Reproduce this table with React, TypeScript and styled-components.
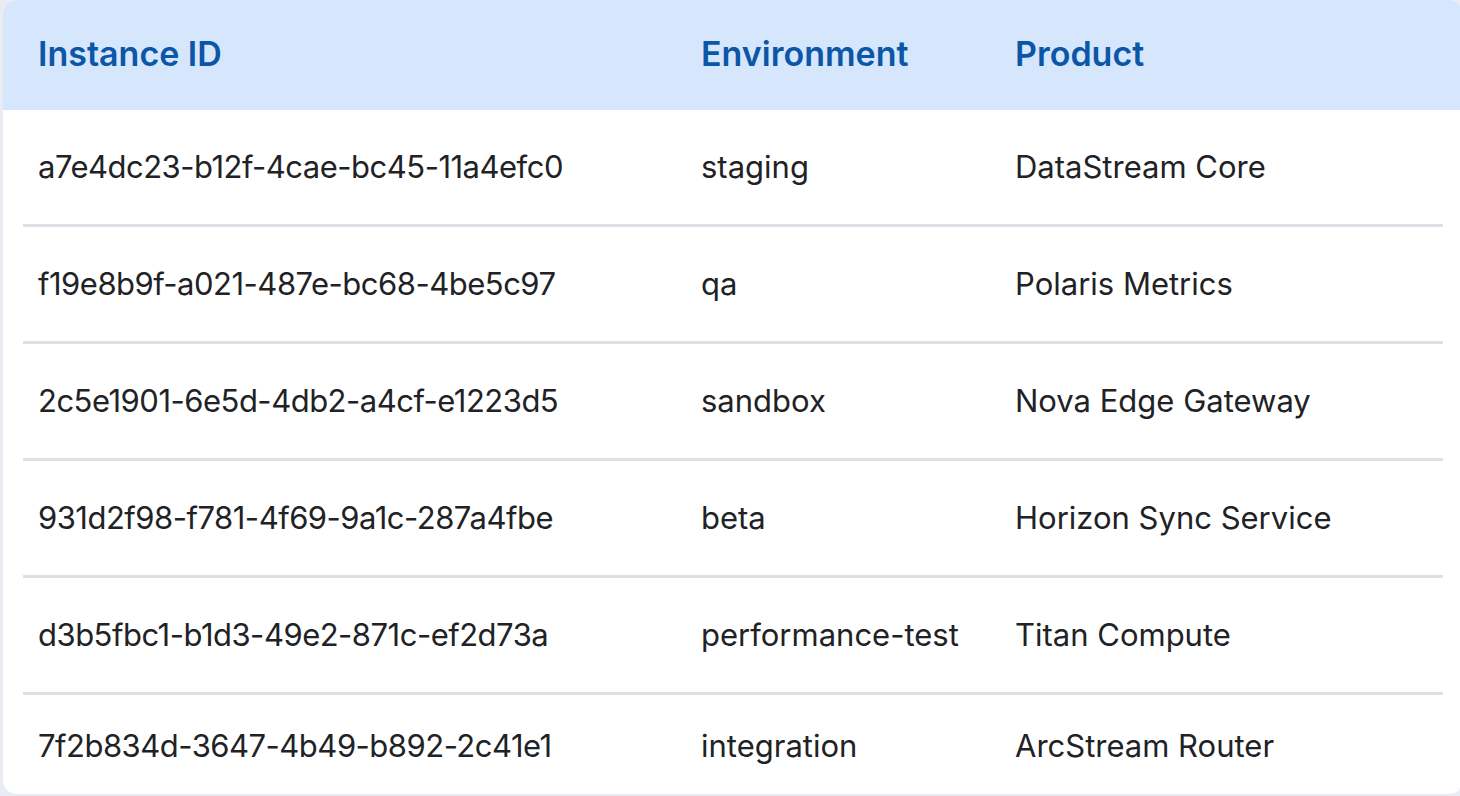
import React from "react";
import styled, { createGlobalStyle } from "styled-components";

const Global = createGlobalStyle`
  html, body { margin: 0; padding: 0; background: #e9edf3; overflow: hidden; }
  body { font-family: Inter, "Noto Sans", sans-serif; }
`;

const Card = styled.div`
  margin-left: 3px;
  width: 1460px;
  height: 794px;
  background: #ffffff;
  border-radius: 14px;
  overflow: hidden;
`;

const Header = styled.div`
  display: grid;
  grid-template-columns: 663px 314px 1fr;
  align-items: center;
  height: 110px;
  padding: 0 35px 4px;
  box-sizing: border-box;
  background: #d5e6fd;
`;

const HeadCell = styled.div`
  font-size: 34px;
  font-weight: 600;
  color: #0b56a6;
  white-space: nowrap;
`;

const Body = styled.div`
  padding: 0 20px;
`;

const Row = styled.div<{ $last?: boolean }>`
  display: grid;
  grid-template-columns: 663px 314px 1fr;
  align-items: center;
  height: ${(p) => (p.$last ? "101px" : "114px")};
  padding: 0 15px;
  border-bottom: ${(p) => (p.$last ? "none" : "3px solid #dde0e6")};
  box-sizing: content-box;
`;

const Cell = styled.div<{ $id?: boolean }>`
  font-size: 31px;
  font-weight: 400;
  color: #212225;
  white-space: nowrap;
  letter-spacing: ${(p) => (p.$id ? "-0.5px" : "0")};
  margin-top: -1px;
`;

const rows = [
  ["a7e4dc23-b12f-4cae-bc45-11a4efc0", "staging", "DataStream Core"],
  ["f19e8b9f-a021-487e-bc68-4be5c97", "qa", "Polaris Metrics"],
  ["2c5e1901-6e5d-4db2-a4cf-e1223d5", "sandbox", "Nova Edge Gateway"],
  ["931d2f98-f781-4f69-9a1c-287a4fbe", "beta", "Horizon Sync Service"],
  ["d3b5fbc1-b1d3-49e2-871c-ef2d73a", "performance-test", "Titan Compute"],
  ["7f2b834d-3647-4b49-b892-2c41e1", "integration", "ArcStream Router"],
];

export default function App() {
  return (
    <>
      <Global />
      <Card>
        <Header>
          <HeadCell>Instance ID</HeadCell>
          <HeadCell>Environment</HeadCell>
          <HeadCell>Product</HeadCell>
        </Header>
        <Body>
          {rows.map((r, i) => (
            <Row key={r[0]} $last={i === rows.length - 1}>
              <Cell $id>{r[0]}</Cell>
              <Cell>{r[1]}</Cell>
              <Cell>{r[2]}</Cell>
            </Row>
          ))}
        </Body>
      </Card>
    </>
  );
}
